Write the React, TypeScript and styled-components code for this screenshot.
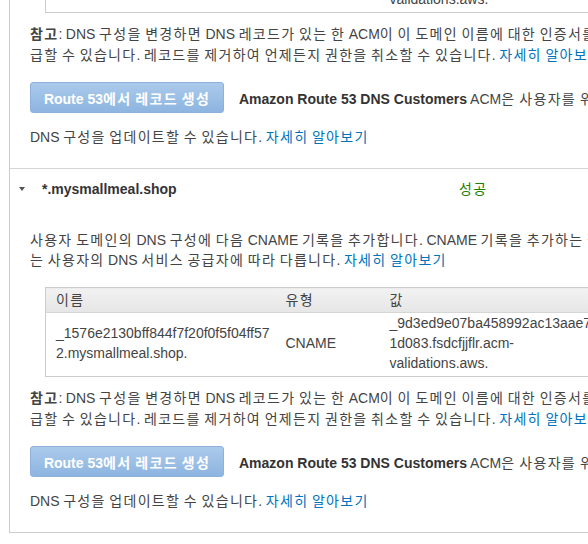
import styled, { createGlobalStyle } from "styled-components";

const GlobalStyle = createGlobalStyle`
  html, body {
    margin: 0;
    padding: 0;
    background: #fff;
    overflow: hidden;
  }
  body {
    font-family: "Liberation Sans", Arial, "Noto Sans CJK KR", sans-serif;
    font-size: 14px;
    color: #444;
  }
`;

// hangul in the original font runs wider than Noto CJK, so pad the syllables a little
const Hg = styled.span`
  letter-spacing: 1.3px;
`;

const ko = (s: string) =>
  s.split(/([\uAC00-\uD7A3]+)/).map((part, i) => (i % 2 ? <Hg key={i}>{part}</Hg> : part));

const Panel = styled.div`
  margin: -196px 0 0 9px;
  width: 1100px;
  border-left: 1px solid #ccc;
  border-bottom: 1px solid #ccc;
`;

const Item = styled.section`
  border-top: 1px solid #d5d5d5;
  padding-bottom: 21px;
`;

const Header = styled.div`
  display: grid;
  grid-template-columns: 32px 417px 1fr;
  align-items: center;
  padding-top: 10px;
  line-height: 20px;
`;

const Caret = styled.span`
  justify-self: start;
  margin-left: 9px;
  width: 0;
  height: 0;
  border-left: 3.5px solid transparent;
  border-right: 3.5px solid transparent;
  border-top: 4px solid #555;
`;

const DomainName = styled.span`
  font-weight: bold;
  color: #333;
`;

const Status = styled.span<{ $ok: boolean }>`
  color: ${(p) => (p.$ok ? "#1d8102" : "#d13212")};
`;

const Body = styled.div`
  padding: 0 20px;
`;

const Para = styled.div<{ $lh?: number; $mt: number }>`
  margin-top: ${(p) => p.$mt}px;
  line-height: ${(p) => p.$lh ?? 20}px;
  word-spacing: -0.3px;
`;

const Line = styled.div`
  white-space: nowrap;
`;

const Link = styled.a`
  color: #0073bb;
  text-decoration: none;
`;

const Table = styled.table`
  margin: 17px 0 0 15px;
  width: 570px;
  table-layout: fixed;
  border-collapse: collapse;
  border: 1px solid #ccc;
  line-height: 20px;

  th {
    text-align: left;
    font-weight: normal;
    color: #444;
    padding: 2px 4px 2px 10px;
    background: linear-gradient(#f2f2f2, #e6e6e6);
    border-bottom: 1px solid #d6d6d6;
  }

  td {
    padding: 0 4px 3px 10px;
    vertical-align: middle;
    overflow-wrap: break-word;
  }
`;

const ButtonRow = styled.div`
  display: flex;
  align-items: center;
  margin-top: 16px;
  white-space: nowrap;
`;

const CreateButton = styled.button`
  height: 31px;
  width: 194px;
  padding: 0;
  border: 1px solid #8db1da;
  border-radius: 3px;
  background: linear-gradient(#abcaeb, #8db5e0);
  color: #fff;
  font-family: inherit;
  font-size: 14px;
  font-weight: bold;
  cursor: default;
`;

const ButtonNote = styled.span`
  margin-left: 15px;
  b {
    color: #333;
  }
`;

type Domain = {
  name: string;
  ok: boolean;
  recordName: string;
  recordValue: string;
};

const domains: Domain[] = [
  {
    name: "mysmallmeal.shop",
    ok: true,
    recordName: "_8a42c31e6d0b9a7e25c4d80b3e91a6c4.mysmallmeal.shop.",
    recordValue: "_4e2b8a9c3d7e605a4b3c2d1e029a8b73.fsdcfjjflr.acm-validations.aws.",
  },
  {
    name: "*.mysmallmeal.shop",
    ok: true,
    recordName: "_1576e2130bff844f7f20f0f5f04ff572.mysmallmeal.shop.",
    recordValue: "_9d3ed9e07ba458992ac13aae7521d083.fsdcfjjflr.acm-validations.aws.",
  },
];

const DomainItem = ({ domain }: { domain: Domain }) => (
  <Item>
    <Header>
      <Caret />
      <DomainName>{domain.name}</DomainName>
      <Status $ok={domain.ok}>{ko(domain.ok ? "성공" : "실패")}</Status>
    </Header>
    <Body>
      <Para $mt={31}>
        <Line>{ko("사용자 도메인의 DNS 구성에 다음 CNAME 기록을 추가합니다. CNAME 기록을 추가하는 절차")}</Line>
        <Line>
          {ko("는 사용자의 DNS 서비스 공급자에 따라 다릅니다. ")}
          <Link href="#">{ko("자세히 알아보기")}</Link>
        </Line>
      </Para>
      <Table>
        <colgroup>
          <col style={{ width: 230 }} />
          <col style={{ width: 104 }} />
          <col style={{ width: 236 }} />
        </colgroup>
        <thead>
          <tr>
            <th>{ko("이름")}</th>
            <th>{ko("유형")}</th>
            <th>{ko("값")}</th>
          </tr>
        </thead>
        <tbody>
          <tr>
            <td>{domain.recordName}</td>
            <td>CNAME</td>
            <td>{domain.recordValue}</td>
          </tr>
        </tbody>
      </Table>
      <Para $mt={11} $lh={21}>
        <Line>
          <b>{ko("참고")}</b>
          {ko(": DNS 구성을 변경하면 DNS 레코드가 있는 한 ACM이 이 도메인 이름에 대한 인증서를 갱신 및 발")}
        </Line>
        <Line>
          {ko("급할 수 있습니다. 레코드를 제거하여 언제든지 권한을 취소할 수 있습니다. ")}
          <Link href="#">{ko("자세히 알아보기")}</Link>
        </Line>
      </Para>
      <ButtonRow>
        <CreateButton type="button">{ko("Route 53에서 레코드 생성")}</CreateButton>
        <ButtonNote>
          <b>Amazon Route 53 DNS Customers</b> {ko("ACM은 사용자를 위해")}
        </ButtonNote>
      </ButtonRow>
      <Para $mt={14}>
        <Line>
          {ko("DNS 구성을 업데이트할 수 있습니다. ")}
          <Link href="#">{ko("자세히 알아보기")}</Link>
        </Line>
      </Para>
    </Body>
  </Item>
);

const App = () => (
  <>
    <GlobalStyle />
    <Panel>
      {domains.map((d) => (
        <DomainItem key={d.name} domain={d} />
      ))}
    </Panel>
  </>
);

export default App;
